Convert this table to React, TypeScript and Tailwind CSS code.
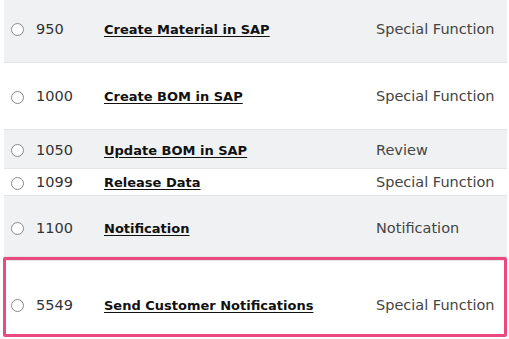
type Step = {
  id: number;
  name: string;
  kind: string;
  row: string;
  shade: boolean;
};

// heights and nudges per row, taken from the task grid
const steps: Step[] = [
  { id: 950, name: "Create Material in SAP", kind: "Special Function", row: "h-[63px] pb-[3px]", shade: true },
  { id: 1000, name: "Create BOM in SAP", kind: "Special Function", row: "h-[67px] pt-[2px]", shade: false },
  { id: 1050, name: "Update BOM in SAP", kind: "Review", row: "h-[39px] pt-[3px]", shade: true },
  { id: 1099, name: "Release Data", kind: "Special Function", row: "h-[27px] pt-[2px]", shade: false },
  { id: 1100, name: "Notification", kind: "Notification", row: "h-[61px] pt-[5px]", shade: true },
];

function Radio() {
  return <span className="inline-block h-[13px] w-[13px] shrink-0 rounded-full border border-[#8a8a8a] bg-white" />;
}

function StepRow({ step }: { step: Step }) {
  return (
    <div
      className={`flex items-center border-b border-[#e3e4e6] ${step.row} ${
        step.shade ? "bg-[#f0f1f3]" : "bg-white"
      }`}
    >
      <div className="flex w-[100px] items-center pl-[7px]">
        <Radio />
        <span className="ml-[12px] text-[14.5px] text-[#333]">{step.id}</span>
      </div>
      <a className="w-[272px] font-bold text-[#111] underline underline-offset-2">{step.name}</a>
      <span className="text-[14.5px] text-[#444]">{step.kind}</span>
    </div>
  );
}

export default function App() {
  return (
    <div
      className="h-[339px] w-[509px] overflow-hidden bg-white pl-[4px] pr-[2px] text-[13px]"
      style={{ fontFamily: "'DejaVu Sans', Verdana, sans-serif" }}
    >
      {steps.map((s) => (
        <StepRow key={s.id} step={s} />
      ))}
      <div className="-ml-[1px] h-[80px] rounded-[2px] border-[3px] border-[#ea4a7e] bg-white">
        <div className="flex h-full items-center border-t border-[#e6e7e9] pt-[16px]">
          <div className="flex w-[98px] items-center pl-[5px]">
            <Radio />
            <span className="ml-[12px] text-[14.5px] text-[#333]">5549</span>
          </div>
          <a className="w-[272px] font-bold text-[#111] underline underline-offset-2">Send Customer Notifications</a>
          <span className="text-[14.5px] text-[#444]">Special Function</span>
        </div>
      </div>
    </div>
  );
}
